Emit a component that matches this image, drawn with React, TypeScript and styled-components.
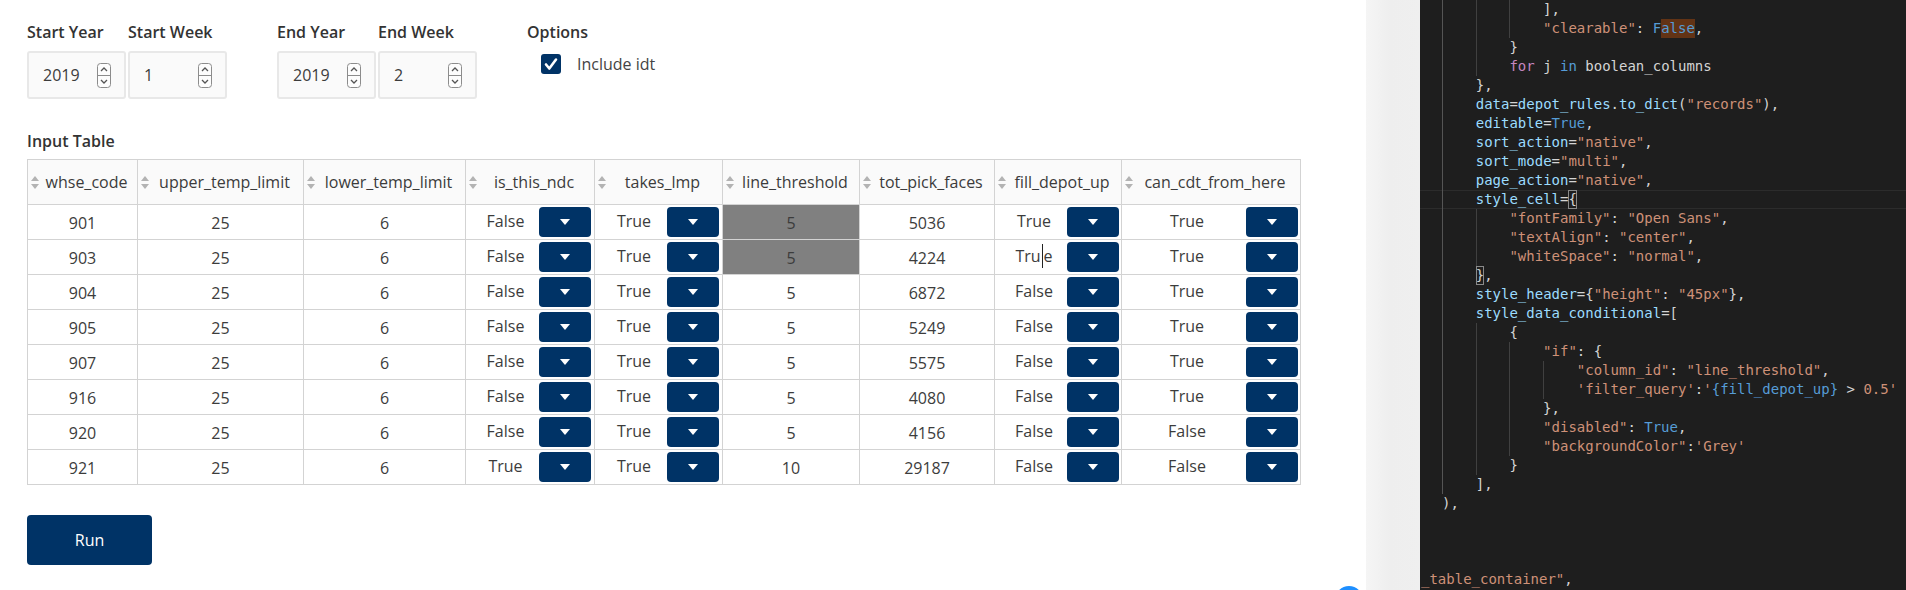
import React from 'react';
import styled, { createGlobalStyle } from 'styled-components';

const NAVY = '#003366';
const LINE = '#d3d3d3';

const GlobalStyle = createGlobalStyle`
  html, body {
    margin: 0;
    padding: 0;
    background: #fff;
  }
  body {
    overflow: hidden;
  }
`;

const Screen = styled.div`
  position: relative;
  display: flex;
  width: 1906px;
  height: 590px;
  overflow: hidden;
`;

/* ---------- dash app ---------- */

const AppPane = styled.div`
  width: 1366px;
  flex-shrink: 0;
  box-sizing: border-box;
  padding: 21px 0 0 27px;
  background: #fff;
  font-family: 'Open Sans', 'Liberation Sans', sans-serif;
  font-size: 16px;
  color: #3c3c3c;
`;

const Controls = styled.div`
  display: flex;
  align-items: flex-start;
  gap: 50px;
`;

const Range = styled.div`
  display: flex;
  gap: 2px;
`;

const Field = styled.div`
  display: flex;
  flex-direction: column;
`;

const FieldLabel = styled.div`
  font-weight: 600;
  line-height: 22px;
  margin-bottom: 8px;
  color: #333;
`;

const NumberBox = styled.div`
  box-sizing: border-box;
  width: 99px;
  height: 48px;
  display: flex;
  align-items: center;
  justify-content: space-between;
  padding: 0 13px 0 14px;
  background: #fafafa;
  border: 2px solid #e8e8e8;
  border-radius: 3px;
  line-height: 22px;
`;

const CheckRow = styled.div`
  display: flex;
  align-items: center;
  gap: 16px;
  padding: 2px 0 0 14px;
  line-height: 22px;
  color: #444;
`;

const SectionTitle = styled.div`
  font-weight: 600;
  line-height: 22px;
  margin: 31px 0 7px;
  color: #333;
`;

const COLS = [110, 166, 162, 129, 128, 137, 135, 127, 179];

const Grid = styled.div`
  display: grid;
  grid-template-columns: ${COLS.map((w) => `${w}px`).join(' ')};
  width: max-content;
  border-top: 1px solid ${LINE};
  border-left: 1px solid ${LINE};
`;

const HeadCell = styled.div`
  box-sizing: border-box;
  height: 45px;
  display: flex;
  align-items: center;
  padding: 0 3px;
  background: #fafafa;
  border-right: 1px solid ${LINE};
  border-bottom: 1px solid ${LINE};
`;

const HeadName = styled.span`
  flex: 1;
  text-align: center;
  white-space: nowrap;
`;

const Cell = styled.div<{ $grey?: boolean }>`
  box-sizing: border-box;
  height: 35px;
  display: flex;
  align-items: center;
  justify-content: center;
  padding-top: 2px;
  background: ${(p) => (p.$grey ? '#808080' : '#fff')};
  border-right: 1px solid ${LINE};
  border-bottom: 1px solid ${LINE};
`;

const DropCell = styled.div<{ $trim: number }>`
  box-sizing: border-box;
  height: 35px;
  display: flex;
  align-items: center;
  padding-right: ${(p) => p.$trim}px;
  background: #fff;
  border-right: 1px solid ${LINE};
  border-bottom: 1px solid ${LINE};
`;

const DropValue = styled.span`
  flex: 1;
  text-align: center;
  padding: 0 0 2px 6px;
`;

const DropButton = styled.div`
  width: 52px;
  height: 30px;
  display: flex;
  align-items: center;
  justify-content: center;
  background: ${NAVY};
  border-radius: 4px;
`;

const TextCaret = styled.span`
  display: inline-block;
  width: 1px;
  height: 24px;
  margin: 0 1px;
  vertical-align: -6px;
  background: #222;
`;

const RunButton = styled.button`
  margin-top: 30px;
  width: 125px;
  height: 50px;
  border: none;
  border-radius: 4px;
  background: ${NAVY};
  color: #fff;
  font-family: 'Open Sans', 'Liberation Sans', sans-serif;
  font-size: 16px;
`;

const BlueDot = styled.div`
  position: absolute;
  left: 1335px;
  top: 586px;
  width: 28px;
  height: 28px;
  border-radius: 50%;
  background: #1e8fff;
`;

/* ---------- editor side ---------- */

const Gutter = styled.div`
  width: 54px;
  flex-shrink: 0;
  background: linear-gradient(to right, #f5f5f5, #eeeeee 45%, #efefef);
`;

const Editor = styled.div`
  flex: 1;
  box-sizing: border-box;
  padding-left: 22px;
  background: #1e1e1e;
  font-family: 'DejaVu Sans Mono', 'Liberation Mono', monospace;
  font-size: 14px;
  line-height: 19px;
  color: #d4d4d4;
  white-space: pre;
  overflow: hidden;
`;

const CodeLine = styled.div<{ $active?: boolean; $shift?: boolean }>`
  display: flex;
  height: 19px;
  margin-left: -22px;
  padding-left: ${(p) => (p.$shift ? 1 : 22)}px;
  box-shadow: ${(p) =>
    p.$active ? 'inset 0 1px #2c2c2c, inset 0 -1px #2c2c2c' : 'none'};
`;

const Indent = styled.span<{ $strong?: boolean }>`
  display: inline-block;
  flex-shrink: 0;
  box-sizing: border-box;
  width: 4ch;
  height: 19px;
  border-left: 1px solid ${(p) => (p.$strong ? '#555' : '#404040')};
`;

const Tok = styled.span<{ $c: string; $mark?: boolean; $box?: boolean }>`
  color: ${(p) => p.$c};
  background: ${(p) => (p.$mark ? '#623315' : 'transparent')};
  outline: ${(p) => (p.$box ? '1px solid #8a8a8a' : 'none')};
  outline-offset: -1px;
`;

/* ---------- icons ---------- */

const Spinner = () => (
  <svg width="14" height="25" viewBox="0 0 14 25">
    <rect x="0.5" y="0.5" width="13" height="24" rx="3" fill="#fdfdfd" stroke="#8c8c8c" />
    <line x1="0.5" y1="12.5" x2="13.5" y2="12.5" stroke="#8c8c8c" />
    <path d="M4 8 L7 5 L10 8" fill="none" stroke="#555" strokeWidth="1.3" />
    <path d="M4 17 L7 20 L10 17" fill="none" stroke="#555" strokeWidth="1.3" />
  </svg>
);

const CheckBox = () => (
  <svg width="20" height="20" viewBox="0 0 20 20">
    <rect x="0" y="0" width="20" height="20" rx="3" fill={NAVY} />
    <path d="M5 10.5 L8.3 14.5 L15 5.5" fill="none" stroke="#fff" strokeWidth="2.6" strokeLinecap="round" strokeLinejoin="round" />
  </svg>
);

const SortIcon = () => (
  <svg width="8" height="13" viewBox="0 0 8 13">
    <path d="M4 0 L8 5 H0 Z" fill="#b3b3b3" />
    <path d="M0 8 H8 L4 13 Z" fill="#b3b3b3" />
  </svg>
);

const DownCaret = () => (
  <svg width="10" height="6" viewBox="0 0 10 6">
    <path d="M0 0 H10 L5 6 Z" fill="#fff" />
  </svg>
);

/* ---------- data ---------- */

const HEADERS = [
  'whse_code',
  'upper_temp_limit',
  'lower_temp_limit',
  'is_this_ndc',
  'takes_lmp',
  'line_threshold',
  'tot_pick_faces',
  'fill_depot_up',
  'can_cdt_from_here',
];

const DROPDOWN_COLS = [3, 4, 7, 8];

const ROWS: (string | number)[][] = [
  [901, 25, 6, 'False', 'True', 5, 5036, 'True', 'True'],
  [903, 25, 6, 'False', 'True', 5, 4224, 'True', 'True'],
  [904, 25, 6, 'False', 'True', 5, 6872, 'False', 'True'],
  [905, 25, 6, 'False', 'True', 5, 5249, 'False', 'True'],
  [907, 25, 6, 'False', 'True', 5, 5575, 'False', 'True'],
  [916, 25, 6, 'False', 'True', 5, 4080, 'False', 'True'],
  [920, 25, 6, 'False', 'True', 5, 4156, 'False', 'False'],
  [921, 25, 6, 'True', 'True', 10, 29187, 'False', 'False'],
];

const S = '#ce9178';
const K = '#569cd6';
const C = '#c586c0';
const V = '#9cdcfe';
const P = '#d4d4d4';

type Token = { t: string; c: string; mark?: boolean; box?: boolean };
type Line = { indent: number; tokens: Token[]; active?: boolean; shift?: boolean };

const tk = (t: string, c: string, extra: Partial<Token> = {}): Token => ({ t, c, ...extra });

const CODE: Line[] = [
  { indent: 3, tokens: [tk('],', P)] },
  { indent: 3, tokens: [tk('"clearable"', S), tk(': ', P), tk('F', K), tk('alse', K, { mark: true }), tk(',', P)] },
  { indent: 2, tokens: [tk('}', P)] },
  { indent: 2, tokens: [tk('for', C), tk(' j ', P), tk('in', K), tk(' boolean_columns', P)] },
  { indent: 1, tokens: [tk('},', P)] },
  { indent: 1, tokens: [tk('data', V), tk('=', P), tk('depot_rules', V), tk('.', P), tk('to_dict', V), tk('(', P), tk('"records"', S), tk('),', P)] },
  { indent: 1, tokens: [tk('editable', V), tk('=', P), tk('True', K), tk(',', P)] },
  { indent: 1, tokens: [tk('sort_action', V), tk('=', P), tk('"native"', S), tk(',', P)] },
  { indent: 1, tokens: [tk('sort_mode', V), tk('=', P), tk('"multi"', S), tk(',', P)] },
  { indent: 1, tokens: [tk('page_action', V), tk('=', P), tk('"native"', S), tk(',', P)] },
  { indent: 1, active: true, tokens: [tk('style_cell', V), tk('=', P), tk('{', P, { box: true })] },
  { indent: 2, tokens: [tk('"fontFamily"', S), tk(': ', P), tk('"Open Sans"', S), tk(',', P)] },
  { indent: 2, tokens: [tk('"textAlign"', S), tk(': ', P), tk('"center"', S), tk(',', P)] },
  { indent: 2, tokens: [tk('"whiteSpace"', S), tk(': ', P), tk('"normal"', S), tk(',', P)] },
  { indent: 1, tokens: [tk('}', P, { box: true }), tk(',', P)] },
  { indent: 1, tokens: [tk('style_header', V), tk('={', P), tk('"height"', S), tk(': ', P), tk('"45px"', S), tk('},', P)] },
  { indent: 1, tokens: [tk('style_data_conditional', V), tk('=[', P)] },
  { indent: 2, tokens: [tk('{', P)] },
  { indent: 3, tokens: [tk('"if"', S), tk(': {', P)] },
  { indent: 4, tokens: [tk('"column_id"', S), tk(': ', P), tk('"line_threshold"', S), tk(',', P)] },
  { indent: 4, tokens: [tk("'filter_query'", S), tk(':', P), tk("'", S), tk('{fill_depot_up}', K), tk(' > ', P), tk("0.5'", S)] },
  { indent: 3, tokens: [tk('},', P)] },
  { indent: 3, tokens: [tk('"disabled"', S), tk(': ', P), tk('True', K), tk(',', P)] },
  { indent: 3, tokens: [tk('"backgroundColor"', S), tk(':', P), tk("'Grey'", S)] },
  { indent: 2, tokens: [tk('}', P)] },
  { indent: 1, tokens: [tk('],', P)] },
  { indent: 0, tokens: [tk('),', P)] },
  { indent: 0, tokens: [] },
  { indent: 0, tokens: [] },
  { indent: 0, tokens: [] },
  { indent: 0, shift: true, tokens: [tk('_table_container"', S), tk(',', P)] },
];

/* ---------- pieces ---------- */

const NumberField = ({ label, value }: { label: string; value: number }) => (
  <Field>
    <FieldLabel>{label}</FieldLabel>
    <NumberBox>
      <span>{value}</span>
      <Spinner />
    </NumberBox>
  </Field>
);

const renderValue = (value: string | number, caret: boolean) => {
  if (!caret) return value;
  const s = String(value);
  return (
    <>
      {s.slice(0, 3)}
      <TextCaret />
      {s.slice(3)}
    </>
  );
};

const DataTable = () => (
  <Grid>
    {HEADERS.map((h) => (
      <HeadCell key={h}>
        <SortIcon />
        <HeadName>{h}</HeadName>
      </HeadCell>
    ))}
    {ROWS.map((row, r) =>
      row.map((v, c) => {
        const key = `${r}-${c}`;
        if (DROPDOWN_COLS.includes(c)) {
          return (
            <DropCell key={key} $trim={c >= 7 ? 2 : 3}>
              <DropValue>{renderValue(v, r === 1 && c === 7)}</DropValue>
              <DropButton>
                <DownCaret />
              </DropButton>
            </DropCell>
          );
        }
        const grey = c === 5 && row[7] === 'True';
        return (
          <Cell key={key} $grey={grey}>
            {v}
          </Cell>
        );
      })
    )}
  </Grid>
);

const CodeView = () => (
  <Editor>
    {CODE.map((line, i) => (
      <CodeLine key={i} $active={line.active} $shift={line.shift}>
        {Array.from({ length: line.indent }).map((_, g) => (
          <Indent key={g} $strong={g === 0} />
        ))}
        {line.tokens.map((t, j) => (
          <Tok key={j} $c={t.c} $mark={t.mark} $box={t.box}>
            {t.t}
          </Tok>
        ))}
      </CodeLine>
    ))}
  </Editor>
);

export default function App() {
  return (
    <>
      <GlobalStyle />
      <Screen>
        <AppPane>
          <Controls>
            <Range>
              <NumberField label="Start Year" value={2019} />
              <NumberField label="Start Week" value={1} />
            </Range>
            <Range>
              <NumberField label="End Year" value={2019} />
              <NumberField label="End Week" value={2} />
            </Range>
            <Field>
              <FieldLabel>Options</FieldLabel>
              <CheckRow>
                <CheckBox />
                <span>Include idt</span>
              </CheckRow>
            </Field>
          </Controls>

          <SectionTitle>Input Table</SectionTitle>
          <DataTable />

          <RunButton>Run</RunButton>
        </AppPane>
        <Gutter />
        <CodeView />
        <BlueDot />
      </Screen>
    </>
  );
}
